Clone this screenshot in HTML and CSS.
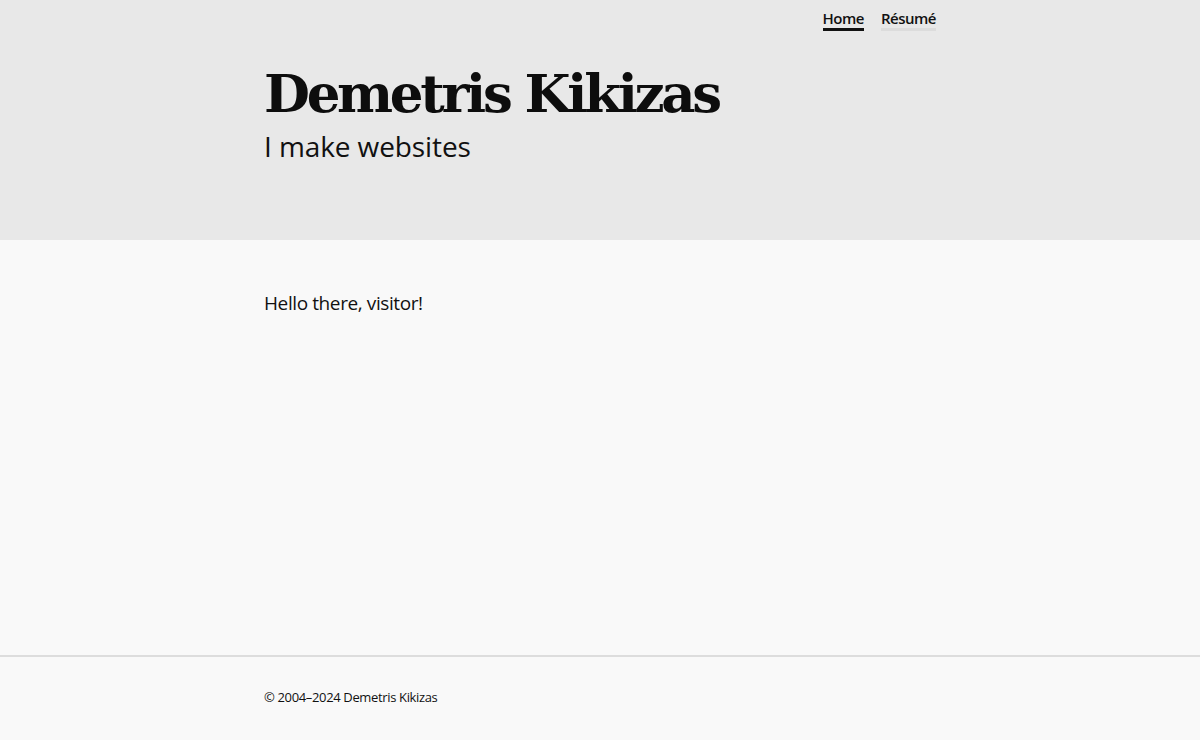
FILE: index.html
```html
<!DOCTYPE html>
<html lang="en">
<head>
<meta charset="utf-8">
<title>Demetris Kikizas</title>
<link rel="stylesheet" href="styles.css">
</head>
<body>
<header class="site-header">
  <div class="container">
    <nav class="nav">
      <a class="nav-link active" href="#">Home</a>
      <a class="nav-link" href="#">Résumé</a>
    </nav>
    <h1 class="title">Demetris Kikizas</h1>
    <p class="tagline">I make websites</p>
  </div>
</header>
<main class="content">
  <div class="container">
    <p class="greeting">Hello there, visitor!</p>
  </div>
</main>
<footer class="site-footer">
  <div class="container">
    <p class="copy">© 2004–2024 Demetris Kikizas</p>
  </div>
</footer>
</body>
</html>
```
FILE: styles.css
```css
* { box-sizing: border-box; }
html, body { margin: 0; padding: 0; }
body {
  font-family: "Open Sans", "Noto Sans", sans-serif;
  color: #111;
  background: #f9f9f9;
  height: 740px;
  display: flex;
  flex-direction: column;
}
.container {
  width: 672px;
  margin: 0 auto;
}
.site-header {
  background: #e8e8e8;
  height: 240px;
}
.nav {
  display: flex;
  justify-content: flex-end;
  gap: 17px;
  padding-top: 8px;
}
.nav-link {
  font-size: 15px;
  font-weight: 600;
  color: #111;
  text-decoration: none;
  line-height: 20px;
  border-bottom: 3px solid #dcdcdc;
  letter-spacing: -0.5px;
}
.nav-link.active { border-bottom-color: #111; }
.title {
  font-family: "DejaVu Serif", serif;
  font-weight: 700;
  font-size: 53px;
  line-height: 60px;
  margin: 32px 0 0;
  letter-spacing: -3.3px;
  color: #0d0d0d;
}
.tagline {
  font-size: 28px;
  line-height: 36px;
  margin: 5px 0 0;
  letter-spacing: -0.1px;
}
.content { flex: 1; }
.greeting {
  font-size: 19px;
  margin: 50px 0 0;
  letter-spacing: -0.4px;
}
.site-footer {
  border-top: 2px solid #dddddd;
  height: 85px;
}
.copy {
  font-size: 13px;
  margin: 31px 0 0;
  letter-spacing: -0.35px;
}
```
